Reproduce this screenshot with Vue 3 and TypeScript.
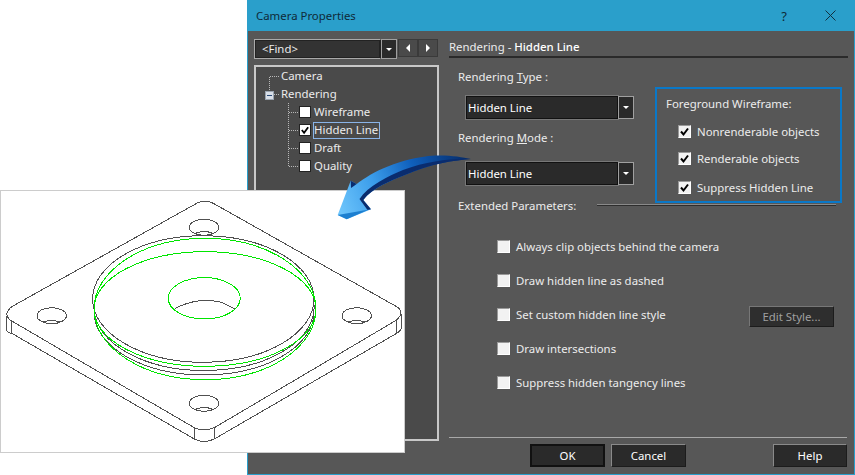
<script setup lang="ts">
const treeChildren = [
  { label: "Wireframe", checked: false, selected: false },
  { label: "Hidden Line", checked: true, selected: true },
  { label: "Draft", checked: false, selected: false },
  { label: "Quality", checked: false, selected: false },
];

const foreground = ["Nonrenderable objects", "Renderable objects", "Suppress Hidden Line"];

const options = [
  { label: "Always clip objects behind the camera", edit: false },
  { label: "Draw hidden line as dashed", edit: false },
  { label: "Set custom hidden line style", edit: true },
  { label: "Draw intersections", edit: false },
  { label: "Suppress hidden tangency lines", edit: false },
];
</script>

<template>
  <div class="page">
    <div class="dialog">
      <header class="titlebar">
        <span class="title">Camera Properties</span>
        <span class="help-mark">?</span>
        <svg class="close" width="11" height="11" viewBox="0 0 11 11">
          <path d="M0.500 0.500L10.500 10.500M10.500 0.500L0.500 10.500" stroke="#10303f" stroke-width="1" fill="none" />
        </svg>
      </header>

      <div class="body">
        <aside class="side">
          <div class="find-row">
            <div class="find-input">&lt;Find&gt;</div>
            <div class="drop-btn find-drop"><i class="tri-down"></i></div>
            <div class="nav-btn"><i class="tri-left"></i></div>
            <div class="nav-btn"><i class="tri-right"></i></div>
          </div>

          <div class="tree">
            <svg class="tree-lines" width="60" height="110" viewBox="0 0 60 110">
              <path
                d="M12.500 9.500H22M12.500 9.500V24M17 27.500H22M31.500 36V99.500M31.500 45.500H41M31.500 63.500H41M31.500 81.500H41M31.500 99.500H41"
                stroke="#b8b8b8"
                stroke-dasharray="1 1"
                fill="none"
                shape-rendering="crispEdges"
              />
            </svg>
            <div class="tree-row level-1">Camera</div>
            <div class="tree-row level-1">
              <span class="minus"></span>
              Rendering
            </div>
            <div v-for="item in treeChildren" :key="item.label" class="tree-row level-2">
              <span class="tree-check">
                <svg v-if="item.checked" width="10" height="10" viewBox="0 0 11 11">
                  <path d="M2 5.500L4.500 8.500L9 2.500" stroke="#000" stroke-width="2" fill="none" />
                </svg>
              </span>
              <span :class="['tree-label', { selected: item.selected }]">{{ item.label }}</span>
            </div>
          </div>
        </aside>

        <main class="content">
          <h2 class="heading">Rendering - <b>Hidden Line</b></h2>

          <div class="top-row">
            <div class="modes">
              <div class="field-label">Rendering <u>T</u>ype :</div>
              <div class="select">
                <div class="select-value">Hidden Line</div>
                <div class="drop-btn"><i class="tri-down"></i></div>
              </div>
              <div class="field-label second">Rendering <u>M</u>ode :</div>
              <div class="select second-select">
                <div class="select-value">Hidden Line</div>
                <div class="drop-btn"><i class="tri-down"></i></div>
              </div>
            </div>

            <section class="foreground">
              <div class="foreground-title">Foreground Wireframe:</div>
              <div v-for="name in foreground" :key="name" class="fg-row">
                <span class="check">
                  <svg width="11" height="11" viewBox="0 0 11 11">
                    <path d="M2 5.500L4.500 8.500L9 2.500" stroke="#000" stroke-width="2" fill="none" />
                  </svg>
                </span>
                {{ name }}
              </div>
            </section>
          </div>

          <div class="extended">
            <span class="extended-label">Extended Parameters:</span>
            <span class="extended-line"></span>
          </div>

          <div class="options">
            <div v-for="opt in options" :key="opt.label" class="option">
              <span class="check"></span>
              {{ opt.label }}
              <button v-if="opt.edit" class="edit-btn">Edit Style...</button>
            </div>
          </div>

          <footer class="footer">
            <button class="btn default">OK</button>
            <button class="btn">Cancel</button>
            <button class="btn push">Help</button>
          </footer>
        </main>
      </div>
    </div>

    <!-- render preview laid over the dialog -->
    <div class="preview">
      <svg width="403" height="261" viewBox="1 191 403 261" fill="none" shape-rendering="crispEdges">
        <g stroke="#505050" stroke-width="1">
          <path d="M196.700 203.300Q204 199 213.300 203.300L396.700 306.700Q405 312 396.700 320L214.300 427.700Q204 432 194.300 427.700L10 320Q3 314 11.700 306.700Z" />
          <path d="M6.700 316V330Q7 333 11.700 333.300L194.300 439Q204 444 214.300 439L396.700 333.300Q401 331 401.500 327V314" />
          <path d="M11.700 321V333M194.300 428V439M214.300 428V439M396.700 321V333" />
          <ellipse cx="204" cy="227.300" rx="14.700" ry="8" />
          <ellipse cx="51.700" cy="315.700" rx="14.700" ry="8" />
          <ellipse cx="356.700" cy="315.700" rx="14.700" ry="8" />
          <ellipse cx="204" cy="403.300" rx="14.700" ry="8" />
          <path d="M196.500 233Q204 230 212 233M43.500 322Q51.700 319 60 322M348.500 322Q356.700 319 365 322M196.500 409Q204 406 212 409" />
          <ellipse cx="203.300" cy="299" rx="110.700" ry="63.300" />
          <path d="M94 310A110 63 0 0 0 314 305" />
          <path d="M94 312A110 63 0 0 0 314 312" />
          <path d="M175 308.300Q188 302 200 300.700Q212 300 221.700 302.300L235 309" />
        </g>
        <g stroke="#00e600" stroke-width="1">
          <ellipse cx="205" cy="309" rx="111" ry="70.700" />
          <ellipse cx="205" cy="309" rx="111" ry="57.300" />
          <ellipse cx="204.300" cy="298.300" rx="36" ry="20.700" />
        </g>
      </svg>
    </div>

    <svg class="arrow" width="145" height="70" viewBox="335 152 145 70">
      <defs>
        <linearGradient id="arrow-fill" x1="340" y1="210" x2="470" y2="158" gradientUnits="userSpaceOnUse">
          <stop offset="0" stop-color="#6cc4fb" />
          <stop offset="0.3" stop-color="#3a9cea" />
          <stop offset="0.6" stop-color="#0f5fbc" />
          <stop offset="1" stop-color="#062a66" />
        </linearGradient>
      </defs>
      <path
        d="M356.700 184C372 172 400 158 435 155.500C450 155 462 157 471 159C455 160 430 164 405 175C390 181 372 188 363.300 200L371 209.300L346.700 219.300L337.700 215L350.700 180.700Z"
        fill="url(#arrow-fill)"
      />
      <!-- darker underside of the shaft -->
      <path
        d="M471 159C455 160 430 164 405 175C390 181 372 188 363.300 200L371 209.300L367.500 210L359.500 199C368 186 388 176 403 170C428 161 452 158 471 159Z"
        fill="#0a2c6e"
      />
      <path d="M350.700 180.700L356.700 184L351 188Z" fill="#0a2c6e" />
      <path d="M337.700 215L369 209.500L346.700 219.300Z" fill="#1d7fd0" />
    </svg>
  </div>
</template>

<style scoped>
.page {
  position: relative;
  width: 855px;
  height: 475px;
  display: flex;
  justify-content: flex-end;
  overflow: hidden;
  background: #fff;
  font-family: "Noto Sans", "Liberation Sans", sans-serif;
  font-size: 11.4px;
  color: #ececec;
}

.dialog {
  width: 608px;
  height: 475px;
  box-sizing: border-box;
  display: flex;
  flex-direction: column;
  border: 1px solid #2a9fcb;
  border-top: none;
  background: #575757;
}

.titlebar {
  height: 31px;
  flex: none;
  margin: 0 -1px;
  display: flex;
  align-items: center;
  padding: 0 19px 0 9px;
  background: #2a9fcb;
  color: #0f2a38;
}

.title {
  flex: 1;
}

.help-mark {
  margin-right: 38px;
  font-size: 13px;
}

.body {
  flex: 1;
  display: flex;
  min-height: 0;
}

.side {
  width: 185px;
  margin-left: 6px;
  padding-top: 8px;
}

.find-row {
  display: flex;
  height: 20px;
}

.find-input {
  width: 127px;
  box-sizing: border-box;
  line-height: 17px;
  padding-left: 7px;
  background: #333;
  border: 1px solid #aaa;
  border-right-color: #222;
  outline: 1px solid #222;
  outline-offset: -2px;
}

.drop-btn {
  width: 16px;
  flex: none;
  box-sizing: border-box;
  display: flex;
  align-items: center;
  justify-content: center;
  background: #2a2a2a;
  border: 1px solid #a0a0a0;
}

.find-drop {
  margin-right: 1px;
}

.nav-btn {
  width: 20px;
  height: 18px;
  box-sizing: border-box;
  display: flex;
  align-items: center;
  justify-content: center;
  background: #4a4a4a;
  border: 1px solid #3a3a3a;
}

.tri-down {
  width: 0;
  height: 0;
  border-left: 3px solid transparent;
  border-right: 3px solid transparent;
  border-top: 3px solid #fff;
}

.tri-left,
.tri-right {
  width: 0;
  height: 0;
  border-top: 4px solid transparent;
  border-bottom: 4px solid transparent;
}

.tri-left {
  border-right: 4px solid #fff;
}

.tri-right {
  border-left: 4px solid #fff;
}

.tree {
  position: relative;
  height: 376px;
  margin-top: 6px;
  box-sizing: border-box;
  background: #4a4a4a;
  border: 2px solid #c8c8c8;
}

.tree-lines {
  position: absolute;
  left: 1px;
  top: 0;
}

.tree-row {
  position: relative;
  height: 18px;
  display: flex;
  align-items: center;
}

.level-1 {
  box-sizing: border-box;
  padding: 0 0 2px 25px;
}

.level-2 {
  padding-left: 43px;
}

.minus {
  position: absolute;
  left: 9px;
  top: 6px;
  width: 9px;
  height: 9px;
  box-sizing: border-box;
  background: #d9dfe8;
  border: 1px solid #9aa4b0;
}

.minus::after {
  content: "";
  position: absolute;
  left: 1px;
  top: 3px;
  width: 5px;
  height: 1px;
  background: #2a4a78;
}

.tree-check {
  width: 10px;
  height: 10px;
  flex: none;
  background: #fff;
  border: 1px solid #222;
}

.tree-check svg,
.check svg {
  display: block;
}

.tree-label {
  margin-left: 2px;
  padding: 0 1px 2px 0;
  line-height: 13px;
  border: 1px solid transparent;
}

.tree-label.selected {
  border-color: #8ab4e8;
}

.content {
  width: 399px;
  margin-left: 10px;
  padding-top: 8px;
  padding-bottom: 7px;
  box-sizing: border-box;
  display: flex;
  flex-direction: column;
}

.heading {
  margin: 0;
  height: 19px;
  box-sizing: border-box;
  font-size: 11.400px;
  font-weight: 400;
  line-height: 15px;
  border-bottom: 2px solid #2a2a2a;
}

.heading b {
  font-weight: 500;
  color: #fff;
}

.top-row {
  display: flex;
  margin-top: 11px;
}

.modes {
  width: 206px;
  flex: none;
  padding-left: 9px;
  box-sizing: border-box;
}

.field-label {
  height: 16px;
  line-height: 16px;
}

.second {
  margin-top: 11px;
}

.select {
  display: flex;
  width: 168px;
  height: 23px;
  margin: 11px 0 0 8px;
}

.second-select {
  margin-top: 16px;
}

.select-value {
  flex: 1;
  box-sizing: border-box;
  line-height: 21px;
  padding-left: 1px;
  color: #fff;
  background: #2a2a2a;
  border: 1px solid #111;
  box-shadow: 0 0 0 1px #777;
}

.foreground {
  width: 187px;
  height: 116px;
  margin-top: 18px;
  flex: none;
  box-sizing: border-box;
  padding: 7px 0 0 9px;
  border: 2px solid #0a78c8;
}

.foreground-title {
  height: 16px;
  line-height: 16px;
}

.fg-row {
  display: flex;
  align-items: center;
  gap: 6px;
  height: 16px;
  margin: 11px 0 0 12px;
}

.fg-row:last-child {
  margin-top: 13px;
}

.check {
  width: 11px;
  height: 11px;
  flex: none;
  background: #f2f2f2;
  border: 1px solid #fff;
  border-top-color: #999;
  border-left-color: #999;
}

.extended {
  display: flex;
  align-items: center;
  height: 16px;
  margin-top: -6px;
  padding: 0 12px 0 9px;
}

.extended-label {
  width: 139px;
  flex: none;
}

.extended-line {
  flex: 1;
  height: 2px;
  background: linear-gradient(#8a8a8a 50%, #2e2e2e 50%);
}

.options {
  margin-top: 16px;
  padding-left: 48px;
}

.option {
  display: flex;
  align-items: center;
  gap: 6px;
  height: 34px;
}

.edit-btn {
  width: 85px;
  height: 21px;
  margin: 5px 14px 0 auto;
  padding: 0;
  font: inherit;
  color: #a0a0a0;
  background: #2e2e2e;
  border: 1px solid #1c1c1c;
  border-top-color: #777;
  border-left-color: #777;
}

.footer {
  display: flex;
  gap: 6px;
  margin-top: auto;
  margin-right: 1px;
  padding: 6px 0 0 81px;
  border-top: 1px solid #a8a8a8;
}

.btn {
  width: 75px;
  height: 23px;
  padding: 0;
  font: inherit;
  color: #fff;
  background: #2a2a2a;
  border: 1px solid #1c1c1c;
  border-top-color: #8a8a8a;
  border-left-color: #8a8a8a;
}

.btn.default {
  border: 2px solid #111;
}

.push {
  width: 74px;
  margin-left: auto;
}

.preview {
  position: absolute;
  left: 0;
  top: 190px;
  width: 405px;
  height: 263px;
  box-sizing: border-box;
  background: #fff;
  border: 1px solid #ccc;
}

.preview svg {
  display: block;
}

.arrow {
  position: absolute;
  left: 335px;
  top: 152px;
}
</style>
